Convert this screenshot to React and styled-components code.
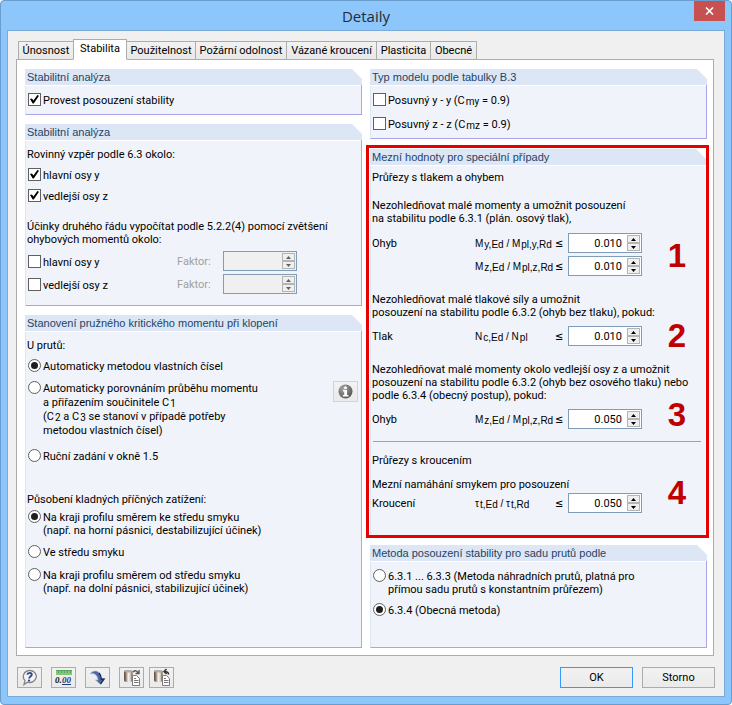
import React, { useId, useState } from "react";
import styled, { createGlobalStyle, css } from "styled-components";

const uiFont = 'Roboto, "DejaVu Sans Condensed", sans-serif';
const headFont = '"Liberation Sans", Arial, sans-serif';

const Global = createGlobalStyle`
  *, *::before, *::after { box-sizing: border-box; }
  body { margin: 0; background: #fff; }
  button, input { font: inherit; color: inherit; }
  input { margin: 0; }
`;

const Window = styled.div`
  display: flex;
  flex-direction: column;
  min-height: 100vh;
  padding: 0 6px 7px;
  border: 1px solid #6a9dcb;
  border-radius: 4px;
  background: #8cc6fb;
  color: #000;
  font: 11px/13px ${uiFont};
`;

const TitleBar = styled.header`
  display: flex;
  align-items: center;
  justify-content: center;
  position: relative;
  height: 29px;
`;

const Title = styled.h1`
  margin: 0;
  color: #262b33;
  font: 400 15px/20px "Open Sans", sans-serif;
`;

const CloseButton = styled.button`
  position: absolute;
  top: 0;
  right: 0;
  display: grid;
  place-items: center;
  width: 31px;
  height: 20px;
  padding: 0;
  border: 0;
  background: #c75050;
`;

const Client = styled.main`
  display: flex;
  flex: 1;
  flex-direction: column;
  padding: 8px 10px 8px 8px;
  border: 1px solid #7aabd8;
  background: #f0f0f0;
`;

const TabList = styled.div`
  display: flex;
  align-items: flex-end;
  height: 21px;
  margin: 0 0 -1px 3px;
`;

const Tab = styled.button`
  height: 19px;
  margin-left: -1px;
  padding: 0;
  flex: 0 0 ${(p) => p.$width}px;
  border: 1px solid #acacac;
  background: linear-gradient(#f2f2f2, #e8e8e8);
  white-space: nowrap;
  ${(p) =>
    p.$active &&
    css`
      z-index: 1;
      height: 21px;
      padding-bottom: 2px;
      border-bottom-color: #fff;
      background: #fff;
    `}
`;

const Page = styled.section`
  display: grid;
  grid-template-columns: 1fr 1fr;
  flex: 1;
  gap: 8px;
  padding: 9px 6px 7px 8px;
  border: 1px solid #acacac;
  background: #fff;
`;

const Column = styled.div`
  display: flex;
  flex-direction: column;
  gap: 9px;
  min-width: 0;
`;

const Group = styled.section`
  display: flex;
  flex-direction: column;
  flex: ${(p) => (p.$grow ? "1" : "none")};
  background: linear-gradient(#a9a5e8, #a9a5e8) right bottom / ${(p) => (p.$plain ? 0 : 1)}px calc(100% - 10px) no-repeat;
`;

const GroupHead = styled.h2`
  height: 16px;
  margin: 0;
  padding: 0 2px;
  background: #dce6f4;
  clip-path: polygon(0 0, calc(100% - 10px) 0, 100% 10px, 100% 100%, 0 100%);
  color: #1f4467;
  font: 400 11px/16px ${headFont};
`;

const GroupBody = styled.div`
  display: flex;
  flex: 1;
  flex-direction: column;
  margin-top: 1px;
  margin-right: 1px;
  padding: ${(p) => p.$top || 7}px 2px ${(p) => p.$bottom || 8}px 1px;
  border-left: 1px solid #dce6f4;
  border-bottom: ${(p) => (p.$plain ? "0" : "1px solid #a9a5e8")};
  background: #f0f3f9;
`;

const Highlight = styled.div`
  margin: -3px -2px -2px -4px;
  padding: 1px 0 0 1px;
  border: 3px solid #e60000;
`;

const Text = styled.p`
  margin: ${(p) => p.$gap || 0}px 0 0;
  white-space: nowrap;
`;

const Option = styled.label`
  display: flex;
  align-items: flex-start;
  gap: 2px;
  margin: ${(p) => p.$gap || 0}px 0 0 1px;
  line-height: ${(p) => (p.$loose ? 14 : 13)}px;
  white-space: nowrap;
`;

const OptionText = styled.span`
  margin-bottom: -1px;
  padding-top: 1px;
`;

const OptionRow = styled.div`
  display: flex;
  align-items: center;
  margin-top: ${(p) => p.$gap || 0}px;
`;

const boxBase = css`
  appearance: none;
  display: grid;
  place-items: center;
  flex: none;
  width: 13px;
  height: 13px;
  background: #fff;
`;

const CheckInput = styled.input.attrs({ type: "checkbox" })`
  ${boxBase}
  border: 1px solid #606060;
  &:checked::before {
    content: "";
    width: 9px;
    height: 9px;
    background: #000;
    clip-path: polygon(0 45%, 22% 38%, 38% 62%, 82% 0, 100% 8%, 42% 95%, 30% 95%);
  }
`;

const RadioInput = styled.input.attrs({ type: "radio" })`
  ${boxBase}
  border: 1px solid #606060;
  border-radius: 50%;
  &:checked::before {
    content: "";
    width: 7px;
    height: 7px;
    border-radius: 50%;
    background: #1e1e1e;
  }
`;

const Sub = styled.sub`
  margin-left: 1px;
  font-size: 10px;
  line-height: 0;
  vertical-align: -1px;
`;

const FactorLabel = styled.label`
  width: 46px;
  color: #a0a0a0;
`;

const OptionCell = styled.div`
  width: 150px;
`;

const SpinBox = styled.div`
  display: flex;
  width: 74px;
  height: 20px;
  padding: 1px;
  border: 1px solid #7f9db9;
  background: ${(p) => (p.$off ? "#f0f0f0" : "#fff")};
`;

const SpinInput = styled.input`
  flex: 1;
  min-width: 0;
  padding: 0 5px 0 0;
  border: 0;
  background: transparent;
  outline: 0;
  text-align: right;
`;

const SpinButtons = styled.div`
  display: grid;
  grid-template-rows: 1fr 1fr;
  width: 13px;
`;

const SpinButton = styled.button`
  display: grid;
  place-items: center;
  min-height: 0;
  padding: 0;
  border: 1px solid #b4b4b4;
  background: #efefef;
  color: ${(p) => (p.disabled ? "#606060" : "#000")};
`;

const CaseBlock = styled.div`
  position: relative;
  margin-top: ${(p) => p.$gap}px;
`;

const CaseRow = styled.div`
  display: grid;
  grid-template-columns: 103px 80px 13px 74px;
  align-items: center;
  margin-top: ${(p) => p.$gap}px;
`;

const Formula = styled.label`
  font: 10px/13px ${headFont};
  white-space: nowrap;
`;

const Relation = styled.span`
  font-family: "DejaVu Sans Condensed", sans-serif;
`;

const CaseNumber = styled.strong`
  position: absolute;
  right: 17px;
  bottom: ${(p) => p.$bottom}px;
  color: #c00000;
  font: 700 33px/36px ${headFont};
`;

const Divider = styled.hr`
  width: calc(100% - 3px);
  margin: 12px 0 0 1px;
  border: 0;
  border-top: 1px solid #a0a0a0;
`;

const InfoRow = styled.div`
  display: flex;
  justify-content: space-between;
  align-items: flex-start;
  margin: 9px 1px 0 0;
`;

const IconButton = styled.button`
  display: grid;
  place-items: center;
  width: 25px;
  height: 21px;
  padding: 0;
  border: 1px solid ${(p) => (p.$soft ? "#d4d4d4" : "#acacac")};
  background: linear-gradient(#f2f2f2, #eaeaea);
`;

const Footer = styled.footer`
  display: flex;
  align-items: center;
  justify-content: space-between;
  margin: 11px -1px 0 1px;
`;

const Tools = styled.div`
  display: flex;
  gap: 9px;
`;

const ToolPair = styled.div`
  display: flex;
  gap: 5px;
`;

const DialogButton = styled.button`
  width: 73px;
  height: 21px;
  padding: 0;
  border: 1px solid ${(p) => (p.$primary ? "#3399ff" : "#acacac")};
  background: linear-gradient(#f2f2f2, #eaeaea);
`;

const Arrow = ({ down }) => (
  <svg width="5" height="3" viewBox="0 0 5 3" aria-hidden="true">
    <path d={down ? "M0 0h5L2.5 3z" : "M0 3h5L2.5 0z"} fill="currentColor" />
  </svg>
);

function Spin({ id, value = "", disabled }) {
  const [current, setCurrent] = useState(value);
  const step = (d) => setCurrent((v) => Math.max(0, Number(v) + d).toFixed(3));
  return (
    <SpinBox $off={disabled}>
      <SpinInput
        id={id}
        value={current}
        disabled={disabled}
        onChange={(e) => setCurrent(e.target.value)}
      />
      <SpinButtons>
        <SpinButton type="button" disabled={disabled} aria-label="+" onClick={() => step(0.001)}>
          <Arrow />
        </SpinButton>
        <SpinButton type="button" disabled={disabled} aria-label="−" onClick={() => step(-0.001)}>
          <Arrow down />
        </SpinButton>
      </SpinButtons>
    </SpinBox>
  );
}

const Check = ({ gap, checked, children }) => (
  <Option $gap={gap}>
    <CheckInput defaultChecked={checked} />
    <OptionText>{children}</OptionText>
  </Option>
);

const Radio = ({ gap, name, checked, loose, children }) => (
  <Option $gap={gap} $loose={loose}>
    <RadioInput name={name} defaultChecked={checked} />
    <OptionText>{children}</OptionText>
  </Option>
);

function FactorRow({ gap, children }) {
  const id = useId();
  return (
    <OptionRow $gap={gap}>
      <OptionCell>
        <Check>{children}</Check>
      </OptionCell>
      <FactorLabel htmlFor={id}>Faktor:</FactorLabel>
      <Spin id={id} disabled />
    </OptionRow>
  );
}

function LimitRow({ gap, name, formula, value }) {
  const id = useId();
  return (
    <CaseRow $gap={gap}>
      <span>{name}</span>
      <Formula htmlFor={id}>{formula}</Formula>
      <Relation>≤</Relation>
      <Spin id={id} value={value} />
    </CaseRow>
  );
}

const Ratio = ({ s, a, b }) => (
  <>
    {s}<Sub>{a}</Sub> / {s}<Sub>{b}</Sub>
  </>
);

const HelpIcon = () => (
  <svg width="17" height="17" viewBox="0 0 17 17" aria-hidden="true">
    <path d="M8.500 1.500a6.500 6 0 1 1-2 11.600L3 15.500l1-4A6.500 6 0 0 1 8.500 1.500z" fill="#f4f4f4" stroke="#858585" strokeWidth="1.300" />
    <path d="M6.300 5.600c.4-2.200 4.500-2.400 4.500-.1 0 1.700-2.400 1.800-2.600 4" fill="none" stroke="#2b4590" strokeWidth="1.900" />
    <circle cx="8" cy="11.600" r="1.100" fill="#2b4590" />
  </svg>
);

const UnitsText = styled.text`
  font: italic 700 9px "Liberation Serif", serif;
`;

const UnitsIcon = () => (
  <svg width="19" height="17" viewBox="0 0 19 17" aria-hidden="true">
    <rect x="2" y="1" width="16" height="5" fill="#7fc77a" />
    <path d="M2 1.500h16M4.500 2v2M7.500 2v2M10.500 2v2M13.500 2v2M16.500 2v2" stroke="#5aa65a" fill="none" />
    <UnitsText x="1" y="14" fill="#111">0.</UnitsText>
    <UnitsText x="8" y="14" fill="#1d3a80">00</UnitsText>
    <path d="M8 15.500h9" stroke="#1d3a80" />
  </svg>
);

const DefaultsIcon = () => (
  <svg width="19" height="17" viewBox="0 0 19 17" aria-hidden="true">
    <path d="M2 5C5 1 12 0 13.500 9.500H17L12.500 15.500 7.500 11H10C9.500 6 6 3.500 2 5z" fill="#4a67a8" stroke="#aab4c6" strokeWidth=".7" />
    <path d="M11 4c1.800 1.800 2.200 4 2.300 6.200h2.600L12.600 15" fill="none" stroke="#1b2a4c" strokeWidth="1.300" />
  </svg>
);

const TransferIcon = ({ back }) => (
  <svg width="19" height="19" viewBox="0 0 19 19" aria-hidden="true">
    <defs>
      <linearGradient id={back ? "canB" : "canA"}>
        <stop offset="0" stopColor="#5b4b40" />
        <stop offset=".2" stopColor="#8a7667" />
        <stop offset=".5" stopColor="#f6f2ec" />
        <stop offset=".75" stopColor="#d8cfc6" />
        <stop offset="1" stopColor="#5c4b40" />
      </linearGradient>
    </defs>
    <path d="M2 3.500c0-2 8.500-2 8.500 0v9c0 2-8.500 2-8.500 0z" fill={`url(#${back ? "canB" : "canA"})`} />
    <ellipse cx="6.250" cy="3.300" rx="4" ry="1.200" fill="#b5aba2" />
    <path d="M10.500 7.500h4l3 3v7h-7z" fill="#fff" stroke="#7b7b7b" />
    <path d="M12 10.500h2M12 12.500h4.500M12 14.500h4.500" stroke="#777" />
    {back ? (
      <path d="M16.500 6.500c0-2-1.500-3-4-3M14.500 1L12 3.500 14.500 6" fill="none" stroke="#333" strokeWidth="1.500" />
    ) : (
      <path d="M11 4c2-2 4-1.500 5 1M13.500 5.500h3.500V2" fill="none" stroke="#555" strokeWidth="1.400" />
    )}
  </svg>
);

const InfoIcon = () => (
  <svg width="17" height="17" viewBox="0 0 17 17" aria-hidden="true">
    <defs>
      <radialGradient id="infoDisc" cx=".35" cy=".3" r=".8">
        <stop offset="0" stopColor="#a5a5a5" />
        <stop offset="1" stopColor="#505050" />
      </radialGradient>
    </defs>
    <circle cx="8.500" cy="8.500" r="7" fill="url(#infoDisc)" />
    <circle cx="8.500" cy="4.700" r="1.500" fill="#fff" />
    <path d="M6 7h4v5h1.500v1.500H5.800V12h1.400V8.500H6z" fill="#fff" />
  </svg>
);

const tabs = [
  ["Únosnost", 56],
  ["Stabilita", 54],
  ["Použitelnost", 70],
  ["Požární odolnost", 92],
  ["Vázané kroucení", 91],
  ["Plasticita", 55],
  ["Obecné", 47],
];

export default function App() {
  const [active, setActive] = useState("Stabilita");
  return (
    <>
      <Global />
      <Window>
        <TitleBar>
          <Title>Detaily</Title>
          <CloseButton type="button" aria-label="Zavřít">
            <svg width="9" height="8" viewBox="0 0 9 8" aria-hidden="true">
              <path d="M1 .5l7 7M8 .5l-7 7" stroke="#fff" strokeWidth="1.600" />
            </svg>
          </CloseButton>
        </TitleBar>
        <Client>
          <TabList role="tablist">
            {tabs.map(([name, width]) => (
              <Tab
                key={name}
                type="button"
                role="tab"
                aria-selected={name === active}
                $active={name === active}
                $width={width}
                onClick={() => setActive(name)}
              >
                {name}
              </Tab>
            ))}
          </TabList>
          <Page>
            <Column>
              <Group>
                <GroupHead>Stabilitní analýza</GroupHead>
                <GroupBody>
                  <Check checked>Provest posouzení stability</Check>
                </GroupBody>
              </Group>
              <Group>
                <GroupHead>Stabilitní analýza</GroupHead>
                <GroupBody $bottom={11}>
                  <Text>Rovinný vzpěr podle 6.3 okolo:</Text>
                  <Check gap={7} checked>hlavní osy y</Check>
                  <Check gap={8} checked>vedlejší osy z</Check>
                  <Text $gap={18}>
                    Účinky druhého řádu vypočítat podle 5.2.2(4) pomocí zvětšení
                    <br />
                    ohybových momentů okolo:
                  </Text>
                  <FactorRow gap={5}>hlavní osy y</FactorRow>
                  <FactorRow gap={3}>vedlejší osy z</FactorRow>
                </GroupBody>
              </Group>
              <Group $grow>
                <GroupHead>Stanovení pružného kritického momentu při klopení</GroupHead>
                <GroupBody>
                  <Text>U prutů:</Text>
                  <Radio gap={7} name="members" checked>Automaticky metodou vlastních čísel</Radio>
                  <InfoRow>
                    <Radio name="members" loose>
                      Automaticky porovnáním průběhu momentu
                      <br />
                      a přiřazením součinitele C<Sub>1</Sub>
                      <br />
                      (C<Sub>2</Sub> a C<Sub>3</Sub> se stanoví v případě potřeby
                      <br />
                      metodou vlastních čísel)
                    </Radio>
                    <IconButton type="button" $soft aria-label="Informace">
                      <InfoIcon />
                    </IconButton>
                  </InfoRow>
                  <Radio gap={12} name="members">Ruční zadání v okně 1.5</Radio>
                  <Text $gap={31}>Působení kladných příčných zatížení:</Text>
                  <Radio gap={4} name="loads" checked>
                    Na kraji profilu směrem ke středu smyku
                    <br />
                    (např. na horní pásnici, destabilizující účinek)
                  </Radio>
                  <Radio gap={9} name="loads">Ve středu smyku</Radio>
                  <Radio gap={10} name="loads">
                    Na kraji profilu směrem od středu smyku
                    <br />
                    (např. na dolní pásnici, stabilizující účinek)
                  </Radio>
                </GroupBody>
              </Group>
            </Column>
            <Column>
              <Group>
                <GroupHead>Typ modelu podle tabulky B.3</GroupHead>
                <GroupBody>
                  <Check>Posuvný y - y (C<Sub>my</Sub> = 0.9)</Check>
                  <Check gap={11}>Posuvný z - z (C<Sub>mz</Sub> = 0.9)</Check>
                </GroupBody>
              </Group>
              <Highlight>
                <Group $plain>
                  <GroupHead>Mezní hodnoty pro speciální případy</GroupHead>
                  <GroupBody $plain $top={5} $bottom={22}>
                    <Text>Průřezy s tlakem a ohybem</Text>
                    <CaseBlock $gap={15}>
                      <Text>
                        Nezohledňovat malé momenty a umožnit posouzení
                        <br />
                        na stabilitu podle 6.3.1 (plán. osový tlak),
                      </Text>
                      <LimitRow gap={8} name="Ohyb" value="0.010" formula={<Ratio s="M" a="y,Ed" b="pl,y,Rd" />} />
                      <LimitRow gap={3} name="" value="0.010" formula={<Ratio s="M" a="z,Ed" b="pl,z,Rd" />} />
                      <CaseNumber $bottom={2}>1</CaseNumber>
                    </CaseBlock>
                    <CaseBlock $gap={17}>
                      <Text>
                        Nezohledňovat malé tlakové síly a umožnit
                        <br />
                        posouzení na stabilitu podle 6.3.2 (ohyb bez tlaku), pokud:
                      </Text>
                      <LimitRow gap={7} name="Tlak" value="0.010" formula={<Ratio s="N" a="c,Ed" b="pl" />} />
                      <CaseNumber $bottom={-8}>2</CaseNumber>
                    </CaseBlock>
                    <CaseBlock $gap={17}>
                      <Text>
                        Nezohledňovat malé momenty okolo vedlejší osy z a umožnit
                        <br />
                        posouzení na stabilitu podle 6.3.2 (ohyb bez osového tlaku) nebo
                        <br />
                        podle 6.3.4 (obecný postup), pokud:
                      </Text>
                      <LimitRow gap={7} name="Ohyb" value="0.050" formula={<Ratio s="M" a="z,Ed" b="pl,z,Rd" />} />
                      <CaseNumber $bottom={-4}>3</CaseNumber>
                    </CaseBlock>
                    <Divider />
                    <Text $gap={12}>Průřezy s kroucením</Text>
                    <CaseBlock $gap={11}>
                      <Text>Mezní namáhání smykem pro posouzení</Text>
                      <LimitRow gap={2} name="Kroucení" value="0.050" formula={<Ratio s="τ" a="t,Ed" b="t,Rd" />} />
                      <CaseNumber $bottom={2}>4</CaseNumber>
                    </CaseBlock>
                  </GroupBody>
                </Group>
              </Highlight>
              <Group $grow>
                <GroupHead>Metoda posouzení stability pro sadu prutů podle</GroupHead>
                <GroupBody>
                  <Radio name="method">
                    6.3.1 ... 6.3.3 (Metoda náhradních prutů, platná pro
                    <br />
                    přímou sadu prutů s konstantním průřezem)
                  </Radio>
                  <Radio gap={8} name="method" checked>6.3.4 (Obecná metoda)</Radio>
                </GroupBody>
              </Group>
            </Column>
          </Page>
          <Footer>
            <Tools>
              <IconButton type="button" aria-label="Nápověda"><HelpIcon /></IconButton>
              <IconButton type="button" aria-label="Jednotky"><UnitsIcon /></IconButton>
              <IconButton type="button" aria-label="Standardní"><DefaultsIcon /></IconButton>
              <ToolPair>
                <IconButton type="button" aria-label="Uložit"><TransferIcon /></IconButton>
                <IconButton type="button" aria-label="Načíst"><TransferIcon back /></IconButton>
              </ToolPair>
            </Tools>
            <Tools>
              <DialogButton type="button" $primary>OK</DialogButton>
              <DialogButton type="button">Storno</DialogButton>
            </Tools>
          </Footer>
        </Client>
      </Window>
    </>
  );
}
